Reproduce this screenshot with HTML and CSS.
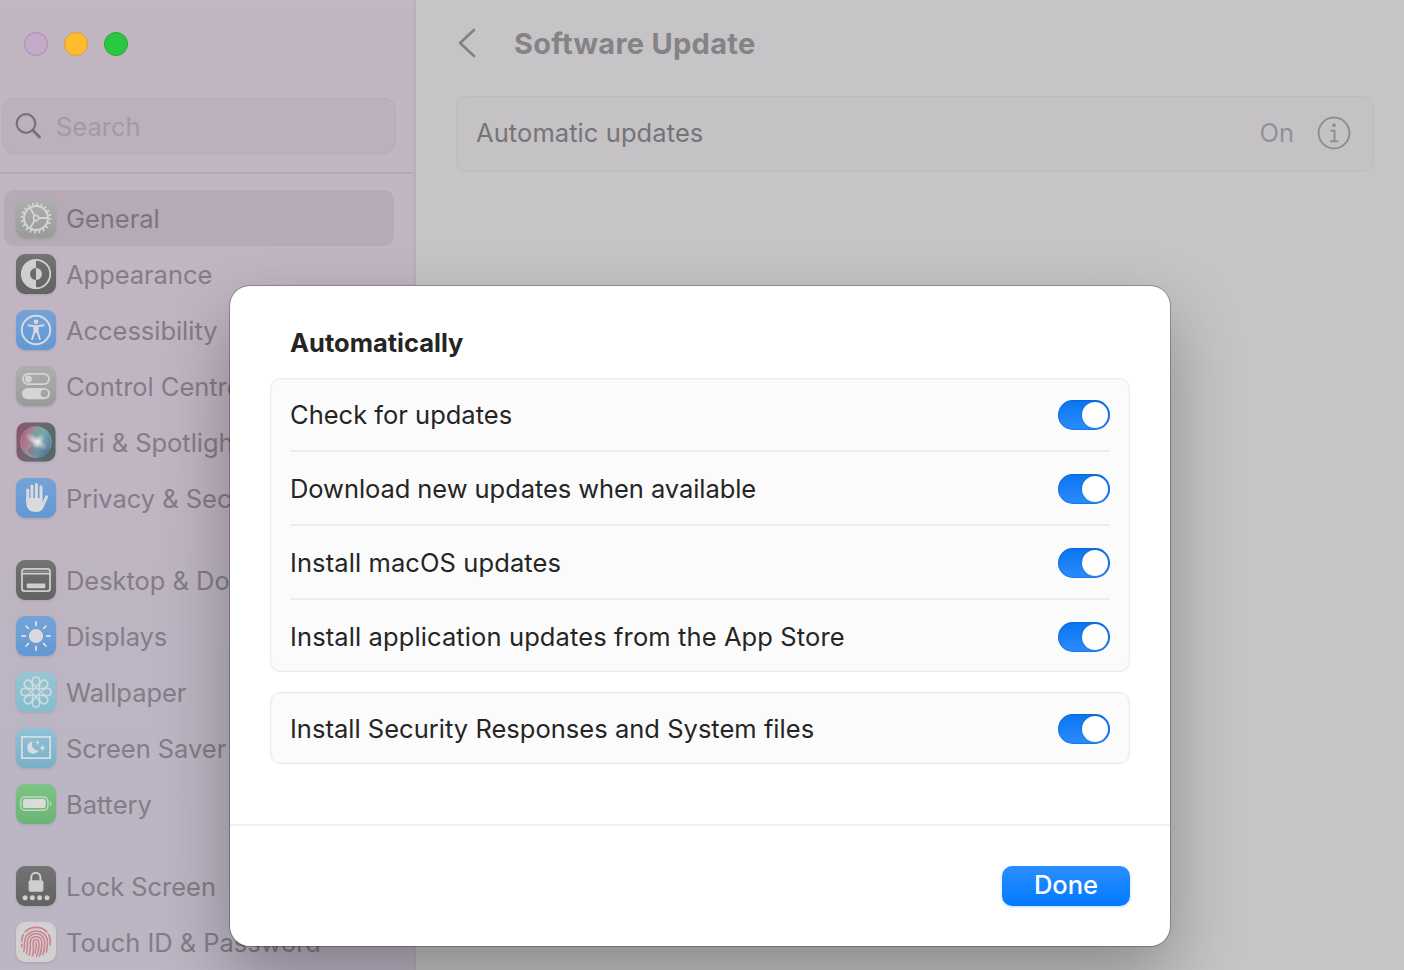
FILE: index.html
```html
<!DOCTYPE html>
<html lang="en">
<head>
<meta charset="utf-8">
<title>Software Update</title>
<link rel="stylesheet" href="styles.css">
</head>
<body>
<div class="window">
  <aside class="sidebar">
    <div class="lights"><span class="light close"></span><span class="light minimise"></span><span class="light zoom"></span></div>
    <div class="search">
      <svg width="28" height="28" viewBox="0 0 28 28" fill="none" stroke="#77707a" stroke-width="2.2" stroke-linecap="round"><circle cx="12" cy="11.5" r="9.3"/><path d="M18.8 18.3L25.5 25" stroke-width="2.8"/></svg>
      <span>Search</span>
    </div>
    <nav class="nav">
      <div class="group">
        <div class="item selected">
          <svg class="icon silver" viewBox="0 0 40 40" fill="none" stroke="#d5d5d5"><circle cx="20" cy="20" r="14.2" stroke-width="2.6" stroke-dasharray="1.7 2.761"/><circle cx="20" cy="20" r="12" stroke-width="2"/><circle cx="20" cy="20" r="2.6" stroke-width="1.6"/><path d="M22.6 20H32M18.7 17.7L14 9.6M18.7 22.3L14 30.4" stroke-width="1.8"/></svg>
          <span>General</span>
        </div>
        <div class="item">
          <svg class="icon dark" viewBox="0 0 40 40"><circle cx="20" cy="20" r="14.2" fill="none" stroke="#cfcfcf" stroke-width="1.8"/><path d="M20 5.8a14.2 14.2 0 0 0 0 28.4V26a6 6 0 0 1 0-12z" fill="#cfcfcf"/><path d="M20 14a6 6 0 0 1 0 12z" fill="#cfcfcf"/></svg>
          <span>Appearance</span>
        </div>
        <div class="item">
          <svg class="icon blue" viewBox="0 0 40 40"><circle cx="20" cy="20" r="14.2" fill="none" stroke="#d7dbe0" stroke-width="1.9"/><circle cx="20" cy="11.8" r="2.3" fill="#d7dbe0"/><path d="M12.4 15.2L18 16.2H22L27.6 15.2M20 16V22M18.4 16.5V22L16.2 29M21.6 16.5V22L23.8 29" fill="none" stroke="#d7dbe0" stroke-width="1.9" stroke-linecap="round" stroke-linejoin="round"/></svg>
          <span>Accessibility</span>
        </div>
        <div class="item">
          <svg class="icon silver" viewBox="0 0 40 40"><rect x="6.9" y="7.9" width="26.2" height="10.2" rx="5.1" fill="none" stroke="#d5d5d5" stroke-width="1.8"/><circle cx="12.4" cy="13" r="3.4" fill="#d5d5d5"/><rect x="6" y="22" width="28" height="11.2" rx="5.6" fill="#d5d5d5"/><circle cx="28.3" cy="27.5" r="3.7" fill="#a2a3a2"/></svg>
          <span>Control Centre</span>
        </div>
        <div class="item">
          <svg class="icon" viewBox="0 0 40 40">
            <defs>
              <linearGradient id="siri-base" x1="0" y1=".2" x2="1" y2=".5"><stop offset="0" stop-color="#8a566c"/><stop offset=".5" stop-color="#6c6873"/><stop offset="1" stop-color="#526967"/></linearGradient>
              <linearGradient id="siri-orb" x1="0" y1=".3" x2="1" y2=".65"><stop offset="0" stop-color="#b3607c"/><stop offset=".45" stop-color="#a391a3"/><stop offset=".65" stop-color="#81a9b5"/><stop offset="1" stop-color="#5479a6"/></linearGradient>
              <linearGradient id="siri-edge" x1="0" y1="0" x2="1" y2="1"><stop offset="0" stop-color="#c56a86"/><stop offset=".5" stop-color="#6aa79b"/><stop offset="1" stop-color="#6d89ab"/></linearGradient>
              <radialGradient id="siri-green"><stop offset="0" stop-color="#65aaa0"/><stop offset="1" stop-color="#65aaa0" stop-opacity="0"/></radialGradient>
              <radialGradient id="siri-glow"><stop offset="0" stop-color="#f0f2f2"/><stop offset=".3" stop-color="#dfe1e4" stop-opacity=".7"/><stop offset="1" stop-color="#cfd5dc" stop-opacity="0"/></radialGradient>
            </defs>
            <rect x=".5" y=".5" width="39" height="39" rx="9" fill="url(#siri-base)"/>
            <circle cx="20" cy="20" r="15.5" fill="url(#siri-orb)" stroke="url(#siri-edge)" stroke-width="1"/>
            <ellipse cx="23" cy="10.5" rx="11" ry="6" fill="url(#siri-green)"/>
            <ellipse cx="23" cy="29" rx="11" ry="6" fill="#4c6378" opacity=".35"/>
            <ellipse cx="20" cy="19.5" rx="14" ry="5" transform="rotate(35 20 20)" fill="url(#siri-glow)"/>
            <ellipse cx="22" cy="19.5" rx="4.5" ry="9" transform="rotate(30 22 20)" fill="url(#siri-glow)"/>
          </svg>
          <span>Siri &amp; Spotlight</span>
        </div>
        <div class="item">
          <svg class="icon blue" viewBox="0 0 40 40" fill="none" stroke="#d9dadc" stroke-linecap="round"><path d="M11.7 12V23M15.9 8V21M20.4 6.6V21M25 8.8V22" stroke-width="3"/><path d="M30.6 18.8L27.4 26" stroke-width="3"/><path d="M10.2 20H26.5V24.5L29.3 22.3C28.7 30 26 34 20 34C13 34 10.2 30 10.2 23.5Z" fill="#d9dadc" stroke="none"/></svg>
          <span>Privacy &amp; Security</span>
        </div>
      </div>
      <div class="group">
        <div class="item">
          <svg class="icon dark" viewBox="0 0 40 40"><rect x="6" y="8.9" width="28" height="22.2" rx="2.6" fill="none" stroke="#cfcfcf" stroke-width="1.8"/><path d="M7 11.6H33" stroke="#8c8c8c" stroke-width="1.8"/><path d="M7 13.8H33" stroke="#cfcfcf" stroke-width="1.4"/><rect x="10.8" y="23.6" width="18.5" height="4.6" rx="1" fill="#cfcfcf"/></svg>
          <span>Desktop &amp; Dock</span>
        </div>
        <div class="item">
          <svg class="icon blue" viewBox="0 0 40 40"><circle cx="20" cy="20" r="7.1" fill="#d9dadc"/><path d="M20 6V9.2M20 30.8V34M6 20H9.2M30.8 20H34M10.1 10.1L12.4 12.4M27.6 27.6L29.9 29.9M29.9 10.1L27.6 12.4M12.4 27.6L10.1 29.9" stroke="#d9dadc" stroke-width="2" stroke-linecap="round"/></svg>
          <span>Displays</span>
        </div>
        <div class="item">
          <svg class="icon cyan" viewBox="0 0 40 40" fill="none" stroke="#d4dbdd" stroke-width="1.5">
            <defs><path id="petal" d="M18.2 17.2L21.8 13.2C24.6 11 24.6 4.9 20 4.9S15.4 11 18.2 13.2L21.8 17.2"/></defs>
            <use href="#petal"/><use href="#petal" transform="rotate(45 20 20)"/><use href="#petal" transform="rotate(90 20 20)"/><use href="#petal" transform="rotate(135 20 20)"/><use href="#petal" transform="rotate(180 20 20)"/><use href="#petal" transform="rotate(225 20 20)"/><use href="#petal" transform="rotate(270 20 20)"/><use href="#petal" transform="rotate(315 20 20)"/>
          </svg>
          <span>Wallpaper</span>
        </div>
        <div class="item">
          <svg class="icon cyan deep" viewBox="0 0 40 40"><rect x="5.9" y="8.9" width="28.2" height="21.2" fill="none" stroke="#d6dcdf" stroke-width="1.8"/><path d="M16.5 13.3A6.2 6.2 0 1 0 22.7 22.5A6.5 6.5 0 0 1 16.5 13.3Z" fill="#d6dcdf"/><path d="M21.5 11.8L22.2 13.8L24 14.5L22.2 15.2L21.5 17.2L20.8 15.2L19 14.5L20.8 13.8ZM26.5 16.4L27.4 19.1L30 20L27.4 20.9L26.5 23.6L25.6 20.9L23 20L25.6 19.1Z" fill="#d6dcdf"/></svg>
          <span>Screen Saver</span>
        </div>
        <div class="item">
          <svg class="icon green" viewBox="0 0 40 40"><rect x="4.7" y="13" width="27.2" height="13.2" rx="4" fill="none" stroke="#c3d9c5" stroke-width="1.4"/><rect x="6.9" y="15.1" width="22.8" height="9" rx="2.2" fill="#d9dcd9"/><path d="M34 17.6A2.3 2.3 0 0 1 34 21.6Z" fill="#c3d9c5" stroke="#c3d9c5" stroke-width=".6"/></svg>
          <span>Battery</span>
        </div>
      </div>
      <div class="group">
        <div class="item">
          <svg class="icon dark" viewBox="0 0 40 40" fill="#cfcfcf"><rect x="12.6" y="14.2" width="14.8" height="11.6" rx="2"/><path d="M15.2 15V11.4a4.6 4.6 0 0 1 9.2 0V15" fill="none" stroke="#cfcfcf" stroke-width="2"/><circle cx="9.1" cy="31.8" r="2.5"/><circle cx="16.4" cy="31.8" r="2.5"/><circle cx="23.7" cy="31.8" r="2.5"/><circle cx="31" cy="31.8" r="2.5"/></svg>
          <span>Lock Screen</span>
        </div>
        <div class="item">
          <svg class="icon white" viewBox="0 0 40 40" fill="none" stroke="#cc8390" stroke-width="1.6" stroke-linecap="round"><path d="M9 10C14.5 3.8 25.5 3.8 31 10M5.8 19C5.8 16.3 6.3 14.3 7.4 12.5M32.5 12.5C34.4 15.5 34.6 19 34.2 23M5.8 22.3V25M7.8 29C8.9 26 8.4 23.5 8.6 20C9.2 5.5 30.8 5 31.5 20C31.6 24 31.3 27 30.2 30.3M10.3 31.6C12 27 11.2 23.5 11.5 19.5C12.3 9 27.8 9.5 28.7 19.5C29 24.5 28.2 29 26.8 32.5M13 33.2C15 28.5 14.1 24 14.4 19.8C15 13 25 13 25.8 19.8C26.2 25 25 30 23.5 34M16.2 34C18.3 29.5 17 25 17.3 20.2C17.8 17 22.4 17 22.9 20.2C23.3 25.5 22.2 30.5 20.4 34.5M20.1 20.7C20.5 24.5 20 28 19 31"/></svg>
          <span>Touch ID &amp; Password</span>
        </div>
      </div>
    </nav>
  </aside>
  <main class="content">
    <header class="header">
      <svg width="20" height="32" viewBox="0 0 20 32" fill="none" stroke="#808081" stroke-width="2.6" stroke-linecap="round" stroke-linejoin="round"><path d="M17 3L3 16L17 29"/></svg>
      <h1>Software Update</h1>
    </header>
    <section class="status">
      <span class="status-name">Automatic updates</span>
      <span class="status-value">On</span>
      <svg width="34" height="34" viewBox="0 0 34 34" fill="none" stroke="#8f8e90" stroke-width="2"><circle cx="17" cy="17" r="15.4"/><circle cx="17" cy="9.2" r="1.9" fill="#8f8e90" stroke="none"/><path d="M13.6 14.7H17.5V25.2M13.2 25.2H21.3"/></svg>
    </section>
  </main>
</div>
<div class="sheet" role="dialog">
  <div class="sheet-body">
    <h2>Automatically</h2>
    <div class="card">
      <div class="row"><span>Check for updates</span><i class="switch"></i></div>
      <div class="row"><span class="download">Download new updates when available</span><i class="switch"></i></div>
      <div class="row"><span class="macos">Install macOS updates</span><i class="switch"></i></div>
      <div class="row"><span class="apps">Install application updates from the App Store</span><i class="switch"></i></div>
    </div>
    <div class="card">
      <div class="row"><span class="security">Install Security Responses and System files</span><i class="switch"></i></div>
    </div>
  </div>
  <footer class="sheet-footer"><button class="done">Done</button></footer>
</div>
</body>
</html>
```
FILE: styles.css
```css
* { box-sizing: border-box; }
body { margin: 0; width: 1404px; height: 970px; overflow: hidden; position: relative; font: 400 25.5px/32px Inter, "Liberation Sans", sans-serif; color: #252525; }
.window { display: grid; grid-template-columns: 416px 1fr; height: 970px; overflow: hidden; }
.sidebar { background: linear-gradient(180deg, #c2b6c3 0%, #c1b5c3 40%, #bcb5c3 75%, #bbb5c4 100%); border-right: 2px solid #b8b0b9; }
.lights { display: flex; gap: 16px; padding: 32px 24px 0; }
.light { width: 24px; height: 24px; border-radius: 50%; border: 1px solid; }
.close { background: #c4a9cb; border-color: #a58bad; }
.minimise { background: #ffbc2f; border-color: #df9f28; }
.zoom { background: #29c840; border-color: #20a934; }
.search { display: flex; align-items: center; gap: 14px; width: 394px; height: 56px; margin: 42px 0 0 2px; padding-left: 11px; border: 1px solid #b6acb7; border-radius: 12px; background: #bbb0bc; color: #a399a5; }
.search span { padding-top: 2px; }
.nav { margin-top: 18px; padding: 16px 4px 0; border-top: 2px solid #b4a9b5; }
.group + .group { margin-top: 26px; }
.item { display: flex; align-items: center; gap: 10px; width: 390px; height: 56px; padding-left: 12px; border-radius: 10px; color: #847c86; white-space: nowrap; }
.item span { padding-top: 2px; letter-spacing: -.04px; }
.selected { background: #b6aab7; color: #7d747f; }
.icon { flex: none; width: 40px; height: 40px; border-radius: 9px; filter: drop-shadow(0 1px 1px rgba(60, 50, 60, .15)); }
.silver { background: linear-gradient(#adaeae, #999b9a); }
.dark { background: linear-gradient(#737373, #616261); }
.blue { background: linear-gradient(#75a3d8, #6398d4); }
.cyan { background: linear-gradient(#98c5d4, #82bccf); }
.deep { background: linear-gradient(#90c2d7, #78b0c8); }
.green { background: linear-gradient(#7bc484, #6cb473); }
.white { background: #d2d0d0; }
.content { background: #c6c4c7; padding: 26px 30px 0 40px; }
.header { display: flex; align-items: center; gap: 37px; height: 34px; padding-left: 1px; }
.header h1 { margin: 0; padding-top: 2px; font-size: 29px; line-height: 34px; font-weight: 700; letter-spacing: .28px; color: #848385; }
.status { display: flex; align-items: center; height: 76px; margin-top: 36px; padding: 0 22px 3px 19px; border: 1px solid #bebcbf; border-radius: 11px; background: #c4c2c5; color: #757476; }
.status-name { letter-spacing: .08px; }
.status-value { margin-left: auto; margin-right: 23px; color: #929193; }
.sheet { position: absolute; left: 230px; top: 286px; width: 940px; height: 660px; border-radius: 20px; background: #fff; display: flex; flex-direction: column; box-shadow: 0 0 0 1px rgba(0, 0, 0, .25), 0 30px 70px rgba(0, 0, 0, .3); }
.sheet-body { height: 540px; padding: 39px 40px 0; border-bottom: 2px solid #f0f0f0; }
h2 { margin: 0 0 17px 20px; font-size: 25.5px; line-height: 36px; font-weight: 700; }
.card { padding: 0 19px; border: 1px solid #ebebeb; border-radius: 10px; background: #fbfbfb; box-shadow: inset 0 0 0 1px #f6f6f6; }
.card + .card { margin-top: 20px; }
.row { display: flex; align-items: center; justify-content: space-between; height: 74px; padding-top: 2px; border-bottom: 2px solid #ededed; white-space: nowrap; }
.row:first-child { height: 73px; padding-top: 0; }
.row:last-child { height: 71px; padding-top: 3px; border-bottom: 0; }
.row:only-child { height: 70px; padding-top: 2px; }
.download { letter-spacing: -.07px; }
.macos { letter-spacing: .1px; }
.apps { letter-spacing: .11px; }
.security { letter-spacing: .02px; }
.switch { width: 52px; height: 30px; padding: 2px; border-radius: 15px; background: linear-gradient(#0a75f0, #2b8cfd); box-shadow: inset 0 0 1px 1px rgba(0, 80, 180, .35); }
.switch::after { content: ""; display: block; width: 26px; height: 26px; margin-left: 22px; border-radius: 50%; background: #fff; box-shadow: 0 0 2px rgba(0, 40, 110, .35); }
.sheet-footer { display: flex; justify-content: flex-end; padding: 40px 40px 0; }
.done { width: 128px; height: 40px; padding: 0 0 2px; border: 0; border-radius: 10px; background: linear-gradient(#2b8fff, #0179ff); box-shadow: 0 1px 3px rgba(0, 122, 255, .3); color: #fff; font: 500 25.5px/36px Inter, "Liberation Sans", sans-serif; }
```
